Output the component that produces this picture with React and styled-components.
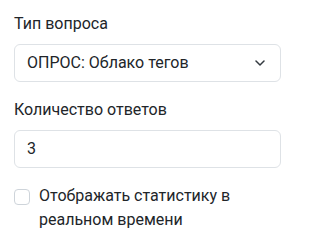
import React from "react";
import styled, { createGlobalStyle } from "styled-components";

const Global = createGlobalStyle`
  html, body { margin: 0; padding: 0; background: #fff; }
  body { font-family: Roboto, "Liberation Sans", Arial, sans-serif; color: #212529; }
  * { box-sizing: border-box; }
`;

const Panel = styled.div`
  padding: 11.5px 14px 0 14px;
  width: 295px;
`;

const Field = styled.div`
  margin-bottom: 16px;
`;

const Label = styled.label`
  display: block;
  font-size: 16px;
  line-height: 1.5;
  color: #212529;
  margin-bottom: 8px;
`;

const SelectWrap = styled.div`
  position: relative;
`;

const Select = styled.select`
  display: block;
  width: 100%;
  appearance: none;
  -webkit-appearance: none;
  font-family: inherit;
  font-size: 16px;
  line-height: 1.5;
  color: #212529;
  background: #fff;
  border: 1px solid #dee2e6;
  border-radius: 6px;
  padding: 6px 36px 6px 12px;
  outline: none;
`;

const Chevron = styled.svg`
  position: absolute;
  right: 16px;
  top: 50%;
  width: 10px;
  height: 6px;
  margin-top: -3px;
  pointer-events: none;
`;

const Input = styled.input`
  display: block;
  width: 100%;
  font-family: inherit;
  font-size: 16px;
  line-height: 1.5;
  color: #212529;
  background: #fff;
  border: 1px solid #dee2e6;
  border-radius: 6px;
  padding: 6px 12px;
  outline: none;
`;

const Check = styled.label`
  display: flex;
  align-items: flex-start;
  gap: 9px;
  font-size: 16px;
  line-height: 1.5;
  color: #212529;
`;

const Box = styled.input`
  appearance: none;
  -webkit-appearance: none;
  flex: 0 0 16px;
  width: 16px;
  height: 16px;
  margin: 5px 0 0 0;
  border: 1px solid #ced4da;
  border-radius: 4px;
  background: #fff;
`;

export default function App() {
  return (
    <>
      <Global />
      <Panel>
        <Field>
          <Label>Тип вопроса</Label>
          <SelectWrap>
            <Select defaultValue="cloud">
              <option value="cloud">ОПРОС: Облако тегов</option>
            </Select>
            <Chevron viewBox="0 0 10 6">
              <path
                d="M1 1l4 4 4-4"
                fill="none"
                stroke="#343a40"
                strokeWidth="1.5"
                strokeLinecap="round"
                strokeLinejoin="round"
              />
            </Chevron>
          </SelectWrap>
        </Field>
        <Field>
          <Label>Количество ответов</Label>
          <Input type="text" defaultValue="3" />
        </Field>
        <Check>
          <Box type="checkbox" />
          <span>Отображать статистику в реальном времени</span>
        </Check>
      </Panel>
    </>
  );
}
